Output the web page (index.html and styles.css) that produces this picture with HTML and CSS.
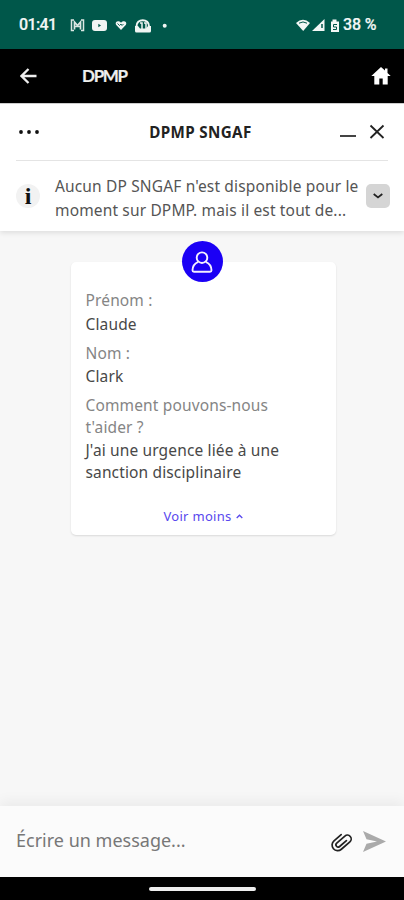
FILE: index.html
```html
<!DOCTYPE html>
<html lang="fr">
<head>
<meta charset="utf-8">
<title>DPMP SNGAF</title>
<link rel="stylesheet" href="styles.css">
</head>
<body>
<div class="screen">
  <div class="status">
    <span class="clock">01:41</span>
    <svg class="notifs" width="100" height="16" viewBox="0 0 100 16" fill="#f0f5f3">
      <path d="M4 3H1.500V13.500H4M11 3h2.500v10.500H11" fill="none" stroke="#dce8e4" stroke-width="1.500"/>
      <path d="M4.500 12.500V5l3 3.500 3-3.500V12.500M4 9.500h7" fill="none" stroke="#dce8e4" stroke-width="1.700"/>
      <rect x="22" y="3" width="15" height="11" rx="3"/><path d="M28.300 6.800v3.400l2.700-1.700z" fill="#00574a"/>
      <path d="M51 13L46 7.700C44.500 4.500 48.500 2.800 51 5.700C53.500 2.800 57.500 4.500 56 7.700z"/>
      <path d="M47.500 6.500l2 2 1.500-1.500 1 1.500 1.500-1.500" fill="none" stroke="#00574a" stroke-width=".9"/>
      <path d="M66.500 9.500C66 1 79.500 1 79 9.500" fill="none" stroke="#f0f5f3" stroke-width="2"/>
      <path d="M65 9h3l2 2.500h6L78 9h3v5q0 1.500-1.500 1.500h-13Q65 15.500 65 14z"/>
      <path d="M70 6h2v6M74 6h2v6" fill="none" stroke="#f0f5f3" stroke-width="1.500"/>
      <circle cx="94.700" cy="8.700" r="2"/>
    </svg>
    <svg class="signals" width="44" height="16" viewBox="0 0 44 16" fill="#f3f7f6">
      <path d="M0 6Q7-.5 14 6L7.200 14z"/><path d="M3 6.200q4-2.500 8 0" fill="none" stroke="#00574a"/>
      <path d="M16 14L28.500 2v12z"/><path d="M26 7v4" stroke="#00574a" stroke-width="1.500"/>
      <path d="M35 4.500h1.500V2.500h4v2H43V15h-8z"/><path d="M41 7.500h-3.500v2.500h3v2.500H37" fill="none" stroke="#00574a" stroke-width="1"/>
    </svg>
    <span class="battery">38 %</span>
  </div>
  <div class="appbar">
    <svg class="back" width="18" height="18" viewBox="0 0 18 18" fill="none" stroke="#eee" stroke-width="2.300"><path d="M16.500 9H2M8.500 2L1.500 9L8.500 16"/></svg>
    <span class="brand">DPMP</span>
    <svg class="home" width="20" height="18" viewBox="0 0 20 18" fill="#fff"><path d="M10 0L.3 9h3v8.500h5V11.500h3.400v6h5V9h3L16.500 5.900V1.500h-2.500v2z"/></svg>
  </div>
  <main class="chat">
    <header class="panel">
      <div class="titlebar">
        <svg class="dots" width="22" height="6" viewBox="0 0 22 6" fill="#111"><circle cx="3" cy="3" r="1.900"/><circle cx="11" cy="3" r="1.900"/><circle cx="19" cy="3" r="1.900"/></svg>
        <h1>DPMP SNGAF</h1>
        <svg class="window" width="46" height="16" viewBox="0 0 46 16" fill="none" stroke="#222"><path d="M1 12H17" stroke="#444" stroke-width="2"/><path d="M31.500 1.500L44.500 14M44.500 1.500L31.500 14" stroke-width="1.800"/></svg>
      </div>
      <div class="notice">
        <span class="info">i</span>
        <p>Aucun DP SNGAF n'est disponible pour le<br>moment sur DPMP. mais il est tout de...</p>
        <span class="expand"><svg width="12" height="8" viewBox="0 0 12 8" fill="none" stroke="#222" stroke-width="1.700"><path d="M1.700 2L6 5.500L10.300 2"/></svg></span>
      </div>
    </header>
    <section class="card">
      <span class="avatar"><svg width="24" height="24" viewBox="0 0 24 24" fill="none" stroke="#f4f0ff" stroke-width="1.900"><circle cx="12" cy="7.700" r="5.300"/><path d="M8.200 11.800C4.500 13.500 2.500 16.500 2.500 20.300Q2.500 21.800 4 21.800H20Q21.500 21.800 21.500 20.300C21.500 16.500 19.500 13.500 15.800 11.800"/></svg></span>
      <dl>
        <dt>Prénom :</dt><dd>Claude</dd>
        <dt>Nom :</dt><dd>Clark</dd>
        <dt>Comment pouvons-nous<br>t'aider ?</dt><dd>J'ai une urgence liée à une<br>sanction disciplinaire</dd>
      </dl>
      <div class="less"><span>Voir moins</span><svg width="7" height="5" viewBox="0 0 7 5" fill="none" stroke="#5848ee" stroke-width="1.300"><path d="M.7 4L3.500 1.200L6.300 4"/></svg></div>
    </section>
  </main>
  <footer class="composer">
    <span class="placeholder">Écrire un message...</span>
    <svg class="clip" width="24" height="22" viewBox="0 0 24 22" fill="none" stroke="#222" stroke-width="1.700" stroke-linecap="round"><g transform="rotate(49 12 11)"><path d="M14.500 6V15a2.200 2.200 0 0 1-4.400 0V4.200a3.800 3.800 0 0 1 7.600 0V15.500a5.600 5.600 0 0 1-11.200 0V6"/></g></svg>
    <svg class="send" width="23" height="21" viewBox="0 0 23 21" fill="#aaa"><path d="M0 0L23 10.500L0 21L3.500 12.700L14 10.500L3.500 8.300z"/></svg>
  </footer>
  <div class="nav"><span></span></div>
</div>
</body>
</html>
```
FILE: styles.css
```css
* { box-sizing: border-box; }
body { margin: 0; font-family: "Noto Sans", sans-serif; background: #000; }
svg { display: block; flex: none; }
h1, p, dl, dd { margin: 0; }
.screen { width: 404px; height: 900px; display: flex; flex-direction: column; overflow: hidden; }
.status { height: 49px; flex: none; background: #00574a; display: flex; align-items: center; padding-left: 19px; color: #f3f7f6; font: 500 16px/20px Roboto, sans-serif; white-space: nowrap; }
.clock { width: 51px; letter-spacing: -.6px; }
.signals { margin-left: 126px; }
.battery { margin-left: 3px; letter-spacing: -.1px; }
.clock, .battery { -webkit-text-stroke: .2px currentColor; }
.appbar { height: 54px; flex: none; background: #000; display: flex; align-items: center; padding: 0 13px 0 20px; color: #eee; }
.brand { margin-left: 44px; font: 700 17px/20px Lato, sans-serif; letter-spacing: -1.300px; -webkit-text-stroke: .2px currentColor; }
.home { margin-left: auto; }
.chat { flex: 1; min-height: 0; background: #f7f7f7; display: flex; flex-direction: column; align-items: center; }
.panel { width: 100%; height: 128px; flex: none; background: #fff; border-top: 1px solid #ccc; padding: 0 16px; box-shadow: 0 2px 5px rgba(0,0,0,.1); }
.titlebar { height: 57px; border-bottom: 1px solid #e4e4e4; display: flex; align-items: center; padding: 0 3px 0 2px; }
h1 { flex: 1; text-align: center; font-size: 15.200px; letter-spacing: .35px; line-height: 20px; font-weight: 700; color: #222; padding-left: 22px; }
.notice { height: 69px; display: flex; align-items: center; color: #555; }
.info { width: 24px; height: 24px; flex: none; border-radius: 50%; background: #f2f2f2; color: #111; text-align: center; font: 700 24px/24px "Liberation Serif", serif; }
.notice p { margin-left: 15px; width: 311px; flex: none; font-size: 15.500px; letter-spacing: .15px; line-height: 24px; white-space: nowrap; padding-top: 4px; }
.expand { width: 24px; height: 24px; flex: none; border-radius: 5px; background: #d5d5d5; display: flex; align-items: center; justify-content: center; }
.card { width: 265px; height: 273px; margin: 31px 0 0 2px; background: #fff; border-radius: 5px; box-shadow: 0 1px 2px rgba(0,0,0,.12); padding: 28px 15px 0; position: relative; }
.avatar { position: absolute; left: 111px; top: -21px; width: 41px; height: 41px; border-radius: 50%; background: #1b00f5; display: flex; align-items: center; justify-content: center; }
dl { font-size: 15.500px; letter-spacing: .14px; line-height: 21.5px; white-space: nowrap; }
dt { color: #858585; margin-bottom: 2px; }
dd { color: #484848; margin-bottom: 7.500px; }
.less { display: flex; align-items: center; justify-content: center; gap: 4px; margin-top: 24px; color: #5848ee; font-size: 13px; letter-spacing: .3px; line-height: 18px; }
.composer { height: 71px; flex: none; background: #fbfbfb; display: flex; align-items: center; padding: 0 18px 0 16px; box-shadow: 0 -5px 12px rgba(0,0,0,.05); position: relative; }
.placeholder { flex: 1; color: #777; font-size: 18px; line-height: 24px; padding-bottom: 4px; }
.send { margin-left: 10px; }
.nav { height: 23px; flex: none; background: #000; display: flex; align-items: center; justify-content: center; }
.nav span { width: 107px; height: 4px; border-radius: 2px; background: #eee; }
```
